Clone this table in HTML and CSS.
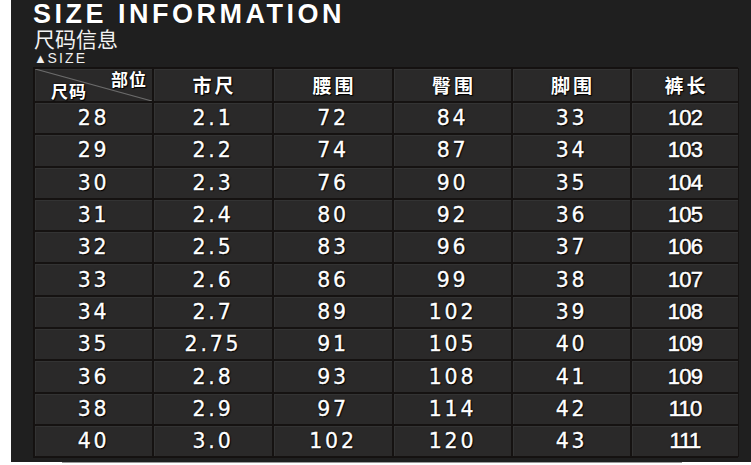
FILE: index.html
```html
<!DOCTYPE html>
<html>
<head>
<meta charset="utf-8">
<link rel="stylesheet" href="styles.css">
</head>
<body>
<div class="panel">
  <div class="title">SIZE INFORMATION</div>
  <div class="subtitle">尺码信息</div>
  <div class="tag"><span class="tri">▲</span>SIZE</div>
  <div class="table">
    <div class="cell head corner">
      <svg class="diag" viewBox="0 0 100 100" preserveAspectRatio="none"><line x1="0" y1="0" x2="100" y2="100" stroke="#6b6b6b" stroke-width="1.2" vector-effect="non-scaling-stroke"/></svg>
      <span class="c-top">部位</span>
      <span class="c-bot">尺码</span>
    </div>
    <div class="cell head">市尺</div>
    <div class="cell head">腰围</div>
    <div class="cell head">臀围</div>
    <div class="cell head">脚围</div>
    <div class="cell head">裤长</div>

    <div class="cell">28</div><div class="cell">2.1</div><div class="cell">72</div><div class="cell">84</div><div class="cell">33</div><div class="cell last">102</div>
    <div class="cell">29</div><div class="cell">2.2</div><div class="cell">74</div><div class="cell">87</div><div class="cell">34</div><div class="cell last">103</div>
    <div class="cell">30</div><div class="cell">2.3</div><div class="cell">76</div><div class="cell">90</div><div class="cell">35</div><div class="cell last">104</div>
    <div class="cell">31</div><div class="cell">2.4</div><div class="cell">80</div><div class="cell">92</div><div class="cell">36</div><div class="cell last">105</div>
    <div class="cell">32</div><div class="cell">2.5</div><div class="cell">83</div><div class="cell">96</div><div class="cell">37</div><div class="cell last">106</div>
    <div class="cell">33</div><div class="cell">2.6</div><div class="cell">86</div><div class="cell">99</div><div class="cell">38</div><div class="cell last">107</div>
    <div class="cell">34</div><div class="cell">2.7</div><div class="cell">89</div><div class="cell">102</div><div class="cell">39</div><div class="cell last">108</div>
    <div class="cell">35</div><div class="cell">2.75</div><div class="cell">91</div><div class="cell">105</div><div class="cell">40</div><div class="cell last">109</div>
    <div class="cell">36</div><div class="cell">2.8</div><div class="cell">93</div><div class="cell">108</div><div class="cell">41</div><div class="cell last">109</div>
    <div class="cell">38</div><div class="cell">2.9</div><div class="cell">97</div><div class="cell">114</div><div class="cell">42</div><div class="cell last">110</div>
    <div class="cell">40</div><div class="cell">3.0</div><div class="cell">102</div><div class="cell">120</div><div class="cell">43</div><div class="cell last">111</div>
  </div>
</div>
<div class="bottom-line"></div>
</body>
</html>
```

FILE: styles.css
```css
html, body {
  margin: 0;
  padding: 0;
  background: #ffffff;
  width: 751px;
  height: 465px;
  overflow: hidden;
}

.panel {
  margin-left: 11px;
  height: 462px;
  background: #1f1f1f;
  padding-left: 22px;
  padding-top: 1px;
  box-sizing: border-box;
  display: flex;
  flex-direction: column;
  font-family: "Liberation Sans", "Noto Sans CJK SC", sans-serif;
  color: #ffffff;
}

.title {
  font-family: "Liberation Sans", sans-serif;
  font-weight: bold;
  font-size: 27px;
  letter-spacing: 3.5px;
  line-height: 26px;
  height: 26px;
  text-shadow: 0 0 1px #000;
}

.subtitle {
  font-family: "Noto Sans CJK SC", sans-serif;
  font-size: 21px;
  line-height: 22px;
  height: 22px;
  margin-left: 1px;
  color: #f2f2f2;
}

.tag {
  font-family: "Liberation Sans", sans-serif;
  font-size: 14px;
  line-height: 14px;
  height: 14px;
  margin-top: 2px;
  letter-spacing: 2.2px;
  margin-left: 1px;
  color: #f0f0f0;
}

.tri {
  font-size: 13px;
  letter-spacing: 0.5px;
}

.table {
  margin-top: 2px;
  width: 705px;
  display: grid;
  grid-template-columns: 119px 120px 120px 119px 119px 108px;
  grid-template-rows: 34px repeat(11, 32.3px);
  background: #161312;
  border: 1px solid #141110;
  box-sizing: border-box;
}

.cell {
  background: #2a2929;
  border: 1px solid #151211;
  box-shadow: inset 1px 1px 0 #333;
  display: flex;
  align-items: center;
  justify-content: center;
  font-family: "DejaVu Sans", sans-serif;
  font-size: 20.5px;
  letter-spacing: 2.8px;
  color: #ffffff;
  text-shadow: 0 0 2px #000, 1px 1px 1px #000;
  -webkit-text-stroke: 0.3px #fff;
}

.cell.last {
  font-family: "Liberation Sans", sans-serif;
  font-size: 22px;
  letter-spacing: -0.8px;
  -webkit-text-stroke: 0.5px #fff;
}

.cell.head {
  font-family: "Noto Sans CJK SC", sans-serif;
  font-weight: bold;
  font-size: 19px;
  letter-spacing: 3px;
  padding-bottom: 2px;
  padding-left: 3px;
  -webkit-text-stroke: 0;
}

.corner {
  position: relative;
  padding: 0;
}

.diag {
  position: absolute;
  left: 0;
  top: 0;
  width: 100%;
  height: 100%;
}

.c-top {
  position: absolute;
  top: 1px;
  right: 5px;
  font-size: 17px;
  letter-spacing: 1px;
  line-height: 18px;
}

.c-bot {
  position: absolute;
  bottom: 1px;
  left: 16px;
  font-size: 17px;
  letter-spacing: 1px;
  line-height: 18px;
}

.bottom-line {
  margin-left: 62px;
  width: 620px;
  height: 1px;
  background: #9a9a9a;
}
```
